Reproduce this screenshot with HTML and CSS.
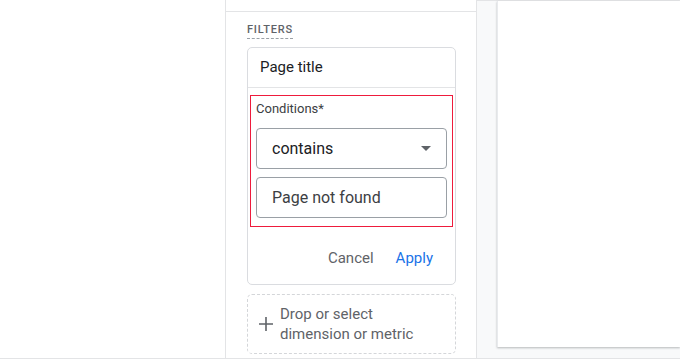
FILE: index.html
```html
<!DOCTYPE html>
<html>
<head>
<meta charset="utf-8">
<link rel="stylesheet" href="styles.css">
</head>
<body>
<div class="page">
  <div class="gutter"></div>
  <div class="panel">
    <div class="panel-top"></div>
    <div class="panel-body">
      <div class="section-label">FILTERS</div>
      <div class="filter-card">
        <div class="filter-head">Page title</div>
        <div class="conditions">
          <div class="cond-label">Conditions*</div>
          <div class="field select">
            <span>contains</span>
            <svg class="caret" width="10" height="5" viewBox="0 0 10 5"><path d="M0 0h10L5 5z" fill="#5f6368"/></svg>
          </div>
          <div class="field input"><span>Page not found</span></div>
        </div>
        <div class="actions">
          <span class="btn cancel">Cancel</span>
          <span class="btn apply">Apply</span>
        </div>
      </div>
      <div class="drop">
        <svg class="plus" width="14" height="14" viewBox="0 0 14 14"><path d="M7 0v14M0 7h14" stroke="#5f6368" stroke-width="1.6"/></svg>
        <div class="drop-text">Drop or select<br>dimension or metric</div>
      </div>
    </div>
  </div>
  <div class="canvas">
    <div class="sheet"></div>
  </div>
</div>
</body>
</html>
```
FILE: styles.css
```css
html, body {
  margin: 0;
  padding: 0;
  background: #ffffff;
  font-family: Roboto, "Liberation Sans", Arial, sans-serif;
}
.page {
  display: flex;
  width: 680px;
  height: 359px;
  box-sizing: border-box;
  border-bottom: 1px solid #e3e4e6;
  overflow: hidden;
}
.gutter {
  width: 225px;
  flex: none;
  border-right: 1px solid #e3e4e6;
}
.panel {
  width: 250px;
  flex: none;
  border-right: 1px solid #e3e4e6;
  display: flex;
  flex-direction: column;
}
.panel-top {
  height: 11px;
  border-bottom: 1px solid #e3e4e6;
  flex: none;
}
.panel-body {
  padding: 11px 0 0 21px;
  display: flex;
  flex-direction: column;
  align-items: flex-start;
}
.section-label {
  font-size: 11px;
  font-weight: 500;
  letter-spacing: 0.8px;
  color: #5f6368;
  line-height: 14px;
  padding-bottom: 1px;
  border-bottom: 1px dashed #9aa0a6;
}
.filter-card {
  margin-top: 8px;
  width: 209px;
  box-sizing: border-box;
  border: 1px solid #dadce0;
  border-radius: 5px;
}
.filter-head {
  height: 40px;
  box-sizing: border-box;
  border-bottom: 1px solid #e3e4e6;
  padding-left: 12px;
  padding-bottom: 1px;
  display: flex;
  align-items: center;
  font-size: 15px;
  font-weight: 400;
  color: #202124;
}
.conditions {
  margin: 7px 2px 0 2px;
  width: 203px;
  box-sizing: border-box;
  border: 1px solid #ee1b3c;
  padding: 5px 5px 8px 5px;
}
.cond-label {
  font-size: 13px;
  line-height: 16px;
  color: #3c4043;
  margin-bottom: 11px;
}
.field {
  height: 41px;
  box-sizing: border-box;
  border: 1px solid #9aa0a6;
  border-radius: 4px;
  display: flex;
  align-items: center;
  padding: 0 15px;
  font-size: 16px;
  color: #202124;
}
.select {
  justify-content: space-between;
  margin-bottom: 8px;
}
.input {
  color: #3c4043;
}
.actions {
  height: 57px;
  display: flex;
  justify-content: flex-end;
  align-items: center;
  gap: 22px;
  padding-right: 22px;
  font-size: 15px;
  padding-top: 5px;
  box-sizing: border-box;
}
.cancel {
  color: #5f6368;
}
.apply {
  color: #1a73e8;
}
.drop {
  margin-top: 9px;
  width: 209px;
  height: 60px;
  box-sizing: border-box;
  border: 1px dashed #d4d6d9;
  border-radius: 5px;
  display: flex;
  align-items: center;
  padding-left: 11px;
  color: #5f6368;
}
.plus {
  flex: none;
  margin-right: 7px;
}
.drop-text {
  font-size: 15px;
  line-height: 20px;
  padding-bottom: 1px;
}
.canvas {
  flex: 1;
  background: #f8f9fa;
  padding-left: 20px;
  border-top: 1px solid #e3e4e6;
}
.sheet {
  height: 346px;
  background: #ffffff;
  border-left: 1px solid #e8eaed;
  box-shadow: 0 1px 2px rgba(60, 64, 67, 0.35);
}
```
